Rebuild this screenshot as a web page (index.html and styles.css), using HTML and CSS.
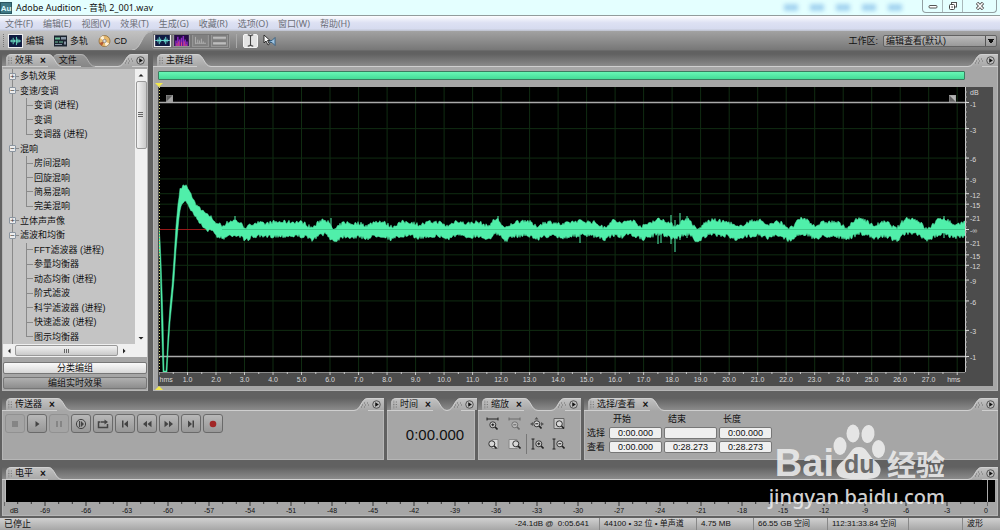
FILE: index.html
```html
<!DOCTYPE html>
<html lang="zh-CN">
<head>
<meta charset="utf-8">
<title>Adobe Audition - 音轨 2_001.wav</title>
<link rel="stylesheet" href="styles.css">
</head>
<body>
<svg class="sprite" aria-hidden="true">
  <defs>
    <linearGradient id="tabFill" x1="0" y1="0" x2="0" y2="1"><stop offset="0" stop-color="#c2c2c2"/><stop offset="1" stop-color="#a6a6a6"/></linearGradient>
    <linearGradient id="dimFill" x1="0" y1="0" x2="0" y2="1"><stop offset="0" stop-color="#989898"/><stop offset="1" stop-color="#868686"/></linearGradient>
    <symbol id="tail" viewBox="0 0 14 13" preserveAspectRatio="none"><path d="M0 0C7 0 7 12 14 12V13H0Z" fill="url(#tabFill)"/><path d="M0 .5C7 .5 7 12.5 14 12.5" fill="none" stroke="#d0d0d0"/></symbol>
    <symbol id="tail-dim" viewBox="0 0 14 13" preserveAspectRatio="none"><path d="M0 0C7 0 7 12 14 12V13H0Z" fill="url(#dimFill)"/><path d="M0 .5C7 .5 7 12.5 14 12.5" fill="none" stroke="#b2b2b2"/></symbol>
    <symbol id="grip" viewBox="0 0 6 9"><path d="M1 0v1M1 2v1M1 4v1M1 6v1M1 8v1M4 1v1M4 4v1M4 7v1" stroke="#747474" stroke-width="1.3"/></symbol>
    <symbol id="grip-flat" viewBox="0 0 9 6"><path d="M3 1h1M6 1h1M1 3h1M4 3h1M7 3h1M0 5h1M3 5h1" stroke="#707070" stroke-width="1.2"/></symbol>
    <symbol id="menu-dot" viewBox="0 0 10 10"><circle cx="5" cy="5" r="4.2" fill="#bcbcbc" stroke="#4a4a4a"/><path d="M3.6 2.4 7.6 5 3.6 7.6Z" fill="#111"/></symbol>
    <symbol id="lens" viewBox="0 0 9 9"><path d="m5.8 5.8 2.7 2.7" stroke="#222" stroke-width="1.6"/><circle cx="3.8" cy="3.8" r="3" fill="#d8d8d8" stroke="#333"/></symbol>
  </defs>
</svg>

<header class="titlebar">
  <svg class="app-icon" viewBox="0 0 12 12"><rect width="12" height="12" fill="#28555f"/><rect x="1" y="1" width="10" height="10" fill="#3f7884"/><text x="6" y="9" text-anchor="middle" class="app-icon-text">Au</text></svg>
  <h1>Adobe Audition - 音轨 2_001.wav</h1>
  <div class="haze" aria-hidden="true"><i></i><i></i><i></i><i></i><i></i></div>
  <div class="window-buttons">
    <button aria-label="最小化"><svg viewBox="0 0 10 8"><rect x="1" y="3.5" width="8" height="2.5" rx="1" fill="#fff" stroke="#555"/></svg></button>
    <button aria-label="还原"><svg viewBox="0 0 10 8"><rect x="3.5" y=".5" width="5" height="4.500" fill="#fff" stroke="#555"/><rect x="1.500" y="2.500" width="5" height="5" rx="1" fill="#fff" stroke="#444"/><rect x="3.500" y="4.300" width="1.200" height="1.500" fill="#444"/></svg></button>
    <button aria-label="关闭"><svg viewBox="0 0 10 8"><path d="m2 .8 6 6.4M8 .8 2 7.200" stroke="#555" stroke-width="3.200"/><path d="m2.400 1.200 5.200 5.600M7.600 1.200 2.400 6.800" stroke="#fff" stroke-width="1.500"/></svg></button>
  </div>
</header>

<nav class="menubar">
  <button>文件(F)</button><button>编辑(E)</button><button>视图(V)</button><button>效果(T)</button><button>生成(G)</button><button>收藏(R)</button><button>选项(O)</button><button>窗口(W)</button><button>帮助(H)</button>
</nav>

<div class="toolbar">
  <div class="modes">
    <svg class="bar-grip" viewBox="0 0 3 14"><path d="M1.500 0v14" stroke="#777" stroke-dasharray="1 1"/></svg>
    <button class="mode on"><svg viewBox="0 0 14 13"><rect width="14" height="13" fill="#101b40"/><path d="M1 6.500h12M3 5v3M4.500 3v7M6 5v3M8 2v9M9.500 4v5M11 5v3" stroke="#6fe3c4"/></svg>编辑</button>
    <button class="mode"><svg viewBox="0 0 13 11"><rect width="13" height="11" fill="#1c2430"/><path d="M1 2h5v2H1zM1 6h3v1H1zM5 6h4v1H5z" fill="#6fbf9c"/><path d="M7 1.500h5v2.500H7zM1 8.500h7v1H1zM10 6h2v3h-2z" fill="#8794a4"/></svg>多轨</button>
    <button class="mode"><svg viewBox="0 0 12 12"><circle cx="6" cy="6" r="5.500" fill="#e8b96c" stroke="#8c6b3d" stroke-width=".8"/><path d="M6 6 1.500 3A5.300 5.300 0 0 1 5 .8ZM6 6l4.700 2.600A5.300 5.300 0 0 1 7 11.200Z" fill="#fff2d8"/><path d="M6 6 1 8a5.300 5.300 0 0 0 2.500 2.700Z" fill="#b55d35"/><circle cx="6" cy="6" r="1.700" fill="#ddd" stroke="#777" stroke-width=".7"/></svg>CD</button>
  </div>
  <svg class="mode-tail" viewBox="0 0 20 20" preserveAspectRatio="none"><path d="M20 0C9 0 10 20 0 20V0Z" fill="url(#tabFill)"/><path d="M20 .5C9 .5 10 20 0 20" fill="none" stroke="#c4c4c4"/></svg>
  <div class="views">
    <button class="view on" aria-label="波形显示"><svg viewBox="0 0 16 12"><rect width="16" height="12" fill="#111a42"/><path d="M0 6h16M3 4v4M4.500 2v8M6 4v4M10 4v4M11.500 2v8M13 4v4" stroke="#6fe3d6"/></svg></button>
    <button class="view" aria-label="频谱显示"><svg viewBox="0 0 16 12"><rect width="16" height="12" fill="#250b45"/><path d="M2 12V6M4 12V2M6 12V5M8 12V3M10 12V1M12 12V5M14 12V7" stroke="#8d2ac2" stroke-width="1.600"/><path d="M3 12V9M5 12V7M8 12V8M11 12V7M13 12v-2" stroke="#e2487b"/></svg></button>
    <button class="view" aria-label="声像频谱"><svg viewBox="0 0 16 12"><rect width="16" height="12" fill="#808080"/><path d="M2.500 10V2M3 9h11M5 9V5M7 9V6M9 9V4M11 9V7" stroke="#b0b0b0" fill="none"/></svg></button>
    <button class="view" aria-label="相位频谱"><svg viewBox="0 0 16 12"><rect width="16" height="12" fill="#7c7c7c"/><path d="M1 3h14M1 9h14" stroke="#aaa" stroke-width="3"/><path d="M1 3h14M1 9h14" stroke="#ccc" stroke-width=".8"/></svg></button>
  </div>
  <div class="tools">
    <button class="tool on" aria-label="时间选择工具"><svg viewBox="0 0 10 12"><path d="M2.500.8Q5 .8 5 2.500Q5 .8 7.500.8M5 2v8M2.500 11.200Q5 11.200 5 9.500q0 1.700 2.500 1.700" fill="none" stroke="#444"/></svg></button>
    <button class="tool" aria-label="搓擦工具"><svg viewBox="0 0 13 13"><path d="M1 1v8l2-2 2 4 1.500-.8-2-3.700H7Z" fill="#fff" stroke="#222" stroke-width=".9"/><path d="M7 6.500h2l3-3v8l-3-3H7Z" fill="#9ec4e2" stroke="#31597b" stroke-width=".9"/></svg></button>
  </div>
  <label class="workspace-label" for="workspace">工作区:</label>
  <select id="workspace"><option>编辑查看(默认)</option></select>
</div>

<main class="workspace">
  <div class="upper">
    <section class="panel effects">
      <div class="head">
        <button class="tab"><svg class="grip"><use href="#grip"/></svg>效果<b>×</b></button><svg class="tail"><use href="#tail"/></svg>
        <button class="tab dim">文件</button><svg class="tail"><use href="#tail-dim"/></svg>
        <span class="fill"></span><svg class="tail flip"><use href="#tail"/></svg>
        <button class="cap" aria-label="面板菜单"><svg class="cap-grip"><use href="#grip-flat"/></svg><svg class="cap-dot"><use href="#menu-dot"/></svg></button>
      </div>
      <div class="body effects-body">
        <div class="tree-frame">
          <ul class="tree">
            <li class="node plus">多轨效果</li>
            <li class="node minus">变速/变调</li>
            <li class="leaf">变调 (进程)</li>
            <li class="leaf">变调</li>
            <li class="leaf last">变调器 (进程)</li>
            <li class="node minus">混响</li>
            <li class="leaf">房间混响</li>
            <li class="leaf">回旋混响</li>
            <li class="leaf">简易混响</li>
            <li class="leaf last">完美混响</li>
            <li class="node plus">立体声声像</li>
            <li class="node minus">滤波和均衡</li>
            <li class="leaf">FFT滤波器 (进程)</li>
            <li class="leaf">参量均衡器</li>
            <li class="leaf">动态均衡 (进程)</li>
            <li class="leaf">阶式滤波</li>
            <li class="leaf">科学滤波器 (进程)</li>
            <li class="leaf">快速滤波 (进程)</li>
            <li class="leaf last">图示均衡器</li>
          </ul>
          <div class="vscroll">
            <button aria-label="向上"><svg viewBox="0 0 8 8"><path d="M1.500 5.500 4 3l2.500 2.500Z" fill="#222"/></svg></button>
            <div class="thumb"><svg viewBox="0 0 6 6"><path d="M0 .5h5M0 2.500h5M0 4.500h5" stroke="#666"/></svg></div>
            <span class="fill"></span>
            <button aria-label="向下"><svg viewBox="0 0 8 8"><path d="M1.500 3 4 5.500 6.500 3Z" fill="#222"/></svg></button>
          </div>
          <div class="hscroll">
            <button aria-label="向左"><svg viewBox="0 0 8 8"><path d="M5.500 1.500 3 4l2.500 2.500Z" fill="#222"/></svg></button>
            <div class="thumb"><svg viewBox="0 0 6 6"><path d="M.5 1v4M2.500 1v4M4.500 1v4" stroke="#666"/></svg></div>
            <button aria-label="向右"><svg viewBox="0 0 8 8"><path d="M3 1.500 5.500 4 3 6.500Z" fill="#222"/></svg></button>
          </div>
        </div>
        <button class="wide light">分类编组</button>
        <button class="wide">编组实时效果</button>
      </div>
    </section>

    <section class="panel editor">
      <div class="head">
        <button class="tab plain"><svg class="grip"><use href="#grip"/></svg>主群组</button><svg class="tail"><use href="#tail"/></svg>
        <span class="fill"></span><svg class="tail flip"><use href="#tail"/></svg>
        <button class="cap" aria-label="面板菜单"><svg class="cap-grip"><use href="#grip-flat"/></svg><svg class="cap-dot"><use href="#menu-dot"/></svg></button>
      </div>
      <div class="body editor-body">
        <div class="range"></div>
        <svg class="marker" viewBox="0 0 8 4"><path d="M0 0h8L4 4Z" fill="#f3e84a"/></svg>
        <div class="display">
          <div class="plot">
            <svg id="wave" viewBox="159 87 806 285" preserveAspectRatio="none"></svg>
            <svg class="corner left" viewBox="0 0 8 8"><rect width="8" height="8" fill="#606060"/><path d="M0 8 8 0v8Z" fill="#a4a4a4"/><path d="M0 0h8v8H0Z" fill="none" stroke="#999"/></svg>
            <svg class="corner right" viewBox="0 0 8 8"><rect width="8" height="8" fill="#606060"/><path d="M0 0h8v8Z" fill="#b4b4b4"/><path d="M0 0h8v8H0Z" fill="none" stroke="#999"/></svg>
          </div>
          <svg class="db" id="db"></svg>
          <div class="time">
            <svg id="time-ticks" viewBox="0 0 28273 3" preserveAspectRatio="none"></svg>
            <div class="time-labels" id="time-labels"></div>
          </div>
        </div>
        <svg class="marker" viewBox="0 0 8 4"><path d="M0 4h8L4 0Z" fill="#f3e84a"/></svg>
      </div>
    </section>
  </div>

  <div class="lower">
    <section class="panel transport">
      <div class="head">
        <button class="tab"><svg class="grip"><use href="#grip"/></svg>传送器<b>×</b></button><svg class="tail"><use href="#tail"/></svg>
        <span class="fill"></span><svg class="tail flip"><use href="#tail"/></svg>
        <button class="cap" aria-label="面板菜单"><svg class="cap-grip"><use href="#grip-flat"/></svg><svg class="cap-dot"><use href="#menu-dot"/></svg></button>
      </div>
      <div class="body keys">
        <button disabled aria-label="停止"><svg viewBox="0 0 12 12"><path d="M3 3h6v6H3z"/></svg></button>
        <button aria-label="播放"><svg viewBox="0 0 12 12"><path d="m4.500 3 4 3-4 3Z"/></svg></button>
        <button disabled aria-label="暂停"><svg viewBox="0 0 12 12"><path d="M3 3h2v6H3zM7 3h2v6H7z"/></svg></button>
        <button aria-label="播放至结尾"><svg viewBox="0 0 12 12"><circle cx="6" cy="6" r="4.600" fill="none" stroke="#444"/><path d="M4 3h1.200v6H4zM6 3l3 3-3 3Z"/></svg></button>
        <button aria-label="循环播放"><svg viewBox="0 0 12 12"><path d="M3 4H1.500v5.500h9V6M3.500 4H8" fill="none" stroke="#444" stroke-width="1.500"/><path d="m7.500 1.500 3.500 2.500-3.500 2.500Z"/></svg></button>
        <button aria-label="转到开头"><svg viewBox="0 0 12 12"><path d="M3 2.500h1.500v7H3zM9 2.500v7L5 6Z"/></svg></button>
        <button aria-label="倒放"><svg viewBox="0 0 12 12"><path d="M6 2.800v6.400L2 6ZM10.500 2.800v6.400L6.500 6Z"/></svg></button>
        <button aria-label="快进"><svg viewBox="0 0 12 12"><path d="M1.500 2.800v6.400l4-3.200ZM6 2.800v6.400L10 6Z"/></svg></button>
        <button aria-label="转到结尾"><svg viewBox="0 0 12 12"><path d="M3 2.500v7L7 6ZM7.500 2.500H9v7H7.500z"/></svg></button>
        <button aria-label="录音"><svg viewBox="0 0 12 12"><circle cx="6" cy="6" r="3.300" fill="#a12626"/></svg></button>
      </div>
    </section>

    <section class="panel clock">
      <div class="head">
        <button class="tab"><svg class="grip"><use href="#grip"/></svg>时间<b>×</b></button><svg class="tail"><use href="#tail"/></svg>
        <span class="fill"></span><svg class="tail flip"><use href="#tail"/></svg>
        <button class="cap" aria-label="面板菜单"><svg class="cap-grip"><use href="#grip-flat"/></svg><svg class="cap-dot"><use href="#menu-dot"/></svg></button>
      </div>
      <div class="body clock-body"><output>0:00.000</output></div>
    </section>

    <section class="panel zoom">
      <div class="head">
        <button class="tab"><svg class="grip"><use href="#grip"/></svg>缩放<b>×</b></button><svg class="tail"><use href="#tail"/></svg>
        <span class="fill"></span><svg class="tail flip"><use href="#tail"/></svg>
        <button class="cap" aria-label="面板菜单"><svg class="cap-grip"><use href="#grip-flat"/></svg><svg class="cap-dot"><use href="#menu-dot"/></svg></button>
      </div>
      <div class="body zoom-body">
        <button aria-label="水平放大"><svg viewBox="0 0 14 14"><path d="M1 2h11M1 .5v3M12 .5v3" stroke="#222"/><use href="#lens" x="3" y="4" width="9" height="9"/><path d="M5.300 7.800h3M6.800 6.300v3" stroke="#111"/></svg></button>
        <button disabled aria-label="水平缩小"><svg viewBox="0 0 14 14"><path d="M1 2h11M1 .5v3M12 .5v3" stroke="#222"/><use href="#lens" x="3" y="4" width="9" height="9"/><path d="M5.300 7.800h3" stroke="#111"/></svg></button>
        <button aria-label="完全缩小"><svg viewBox="0 0 14 14"><path d="M0 7l3-2v4ZM14 7l-3-2v4ZM6.500 0l2 2.500h-4Z" fill="#555"/><use href="#lens" x="3" y="3" width="9" height="9"/><path d="M5.300 6.800h3" stroke="#111"/></svg></button>
        <button aria-label="缩放至选区"><svg viewBox="0 0 14 14"><path d="M2 1.500h10v10H2z" fill="#c6c6c6" stroke="#666"/><use href="#lens" x="3.500" y="3" width="9" height="9"/></svg></button>
        <button aria-label="放大选区左侧"><svg viewBox="0 0 14 14"><path d="M6 2.500h6v9H6z" fill="#d8d8d8" stroke="#888"/><use href="#lens" x="2" y="3" width="9" height="9"/></svg></button>
        <button aria-label="放大选区右侧"><svg viewBox="0 0 14 14"><path d="M1 2.500h8v9H1z" fill="#d8d8d8" stroke="#888"/><use href="#lens" x="4" y="3" width="9" height="9"/></svg></button>
        <button class="split" aria-label="垂直放大"><svg viewBox="0 0 14 14"><path d="M2 2v10M.500 2h3M.500 12h3" stroke="#222"/><use href="#lens" x="4" y="3" width="9" height="9"/><path d="M6.300 6.800h3M7.800 5.300v3" stroke="#111"/></svg></button>
        <button aria-label="垂直缩小"><svg viewBox="0 0 14 14"><path d="M2 2v10M.500 2h3M.500 12h3" stroke="#222"/><use href="#lens" x="4" y="3" width="9" height="9"/><path d="M6.300 6.800h3" stroke="#111"/></svg></button>
      </div>
    </section>

    <section class="panel selection">
      <div class="head">
        <button class="tab"><svg class="grip"><use href="#grip"/></svg>选择/查看<b>×</b></button><svg class="tail"><use href="#tail"/></svg>
        <span class="fill"></span><svg class="tail flip"><use href="#tail"/></svg>
        <button class="cap" aria-label="面板菜单"><svg class="cap-grip"><use href="#grip-flat"/></svg><svg class="cap-dot"><use href="#menu-dot"/></svg></button>
      </div>
      <div class="body selection-body">
        <span></span><span class="col">开始</span><span class="col">结束</span><span class="col">长度</span>
        <span>选择</span><input aria-label="选择 开始" value="0:00.000"><input aria-label="选择 结束" value=""><input aria-label="选择 长度" value="0:00.000">
        <span>查看</span><input aria-label="查看 开始" value="0:00.000"><input aria-label="查看 结束" value="0:28.273"><input aria-label="查看 长度" value="0:28.273">
      </div>
    </section>
  </div>

  <section class="panel levels">
    <div class="head">
      <button class="tab"><svg class="grip"><use href="#grip"/></svg>电平<b>×</b></button><svg class="tail"><use href="#tail"/></svg>
      <span class="fill"></span><svg class="tail flip"><use href="#tail"/></svg>
      <button class="cap" aria-label="面板菜单"><svg class="cap-grip"><use href="#grip-flat"/></svg><svg class="cap-dot"><use href="#menu-dot"/></svg></button>
    </div>
    <div class="body levels-body">
      <div class="meter"></div>
      <div class="level-scale">
        <svg id="level-ticks" viewBox="0 0 984 4" preserveAspectRatio="none"></svg>
        <div class="level-labels" id="level-labels"></div>
      </div>
    </div>
  </section>
</main>

<footer class="status">
  <span class="state">已停止</span>
  <span class="cell peak">-24.1dB @&nbsp; 0:05.641</span>
  <span class="cell format">44100 • 32 位 • 单声道</span>
  <span class="cell size">4.75 MB</span>
  <span class="cell disk">66.55 GB 空间</span>
  <span class="cell remain">112:31:33.84 空间</span>
  <span class="cell blank"></span>
  <span class="cell view-name">波形</span>
</footer>

<div class="watermark" aria-hidden="true">
  <div class="brand">
    <span class="bai">Bai</span>
    <span class="paw"><svg viewBox="0 0 52 56"><g fill="currentColor"><ellipse cx="7" cy="22" rx="6.500" ry="9"/><ellipse cx="20" cy="9.500" rx="6.500" ry="9"/><ellipse cx="35" cy="10" rx="6.500" ry="9" transform="rotate(8 35 10)"/><ellipse cx="45.500" cy="25" rx="6.500" ry="9"/><path d="M26 23c8 0 9 8 15 13 5 4 8 8 6 13-2 6-9 6-21 6S6 55 4 49c-2-5 2-9 7-13 6-5 7-13 15-13Z"/></g></svg><em>du</em></span>
    <span class="jy">经验</span>
  </div>
  <div class="url">jingyan.baidu.com</div>
</div>
<script src="app.js"></script>
</body>
</html>
```
FILE: styles.css
```css
*, *::before, *::after { box-sizing: border-box; }
html, body { margin: 0; }
body {
  min-height: 100vh;
  display: flex;
  flex-direction: column;
  background: #616161;
  color: #111;
  font: 9px/12px "Liberation Sans", "Noto Sans CJK SC", sans-serif;
  overflow: hidden;
}
button, input, select { font: inherit; color: inherit; }
button { border: 0; padding: 0; background: none; display: inline-flex; align-items: center; justify-content: center; white-space: nowrap; }
svg { display: block; flex: none; }
.sprite { position: absolute; width: 0; height: 0; }
.fill { flex: 1; }

.titlebar { display: flex; align-items: center; height: 16px; background: #e4ffff; border-bottom: 1px solid #929c9c; }
.app-icon { width: 12px; height: 12px; margin-right: 4px; }
.app-icon-text { font: bold 8px "Liberation Sans", sans-serif; fill: #d9f6f8; }
.titlebar h1 { margin: 0; font: 9px/15px "Noto Sans", "Noto Sans CJK SC", sans-serif; flex: 1; }
.haze { display: flex; gap: 12px; margin-right: 20px; filter: blur(2px); }
.haze i { width: 14px; height: 7px; background: #a4d4f0; }
.window-buttons { display: flex; align-self: flex-start; margin-right: 3px; border: 1px solid #929fa2; border-top: 0; border-radius: 0 0 4px 4px; }
.window-buttons button { width: 20px; height: 12px; border-right: 1px solid #a9b8ba; }
.window-buttons button:last-child { width: 33px; border: 0; }
.window-buttons svg { width: 10px; height: 8px; }

.menubar { display: flex; gap: 10px; height: 15px; padding-left: 5px; color: #6c6f78; background: linear-gradient(#fdfdff, #dde1f3 45%, #d6dbef 85%, #bcc0cc); font-family: "Noto Sans", "Noto Sans CJK SC", sans-serif; }

.toolbar { display: flex; align-items: center; height: 20px; padding-right: 3px; background: linear-gradient(#a2a2a2, #777); border-bottom: 1px solid #6a6a6a; }
.modes { display: flex; align-items: center; align-self: stretch; gap: 10px; width: 132px; padding-left: 2px; background: linear-gradient(#c2c2c2, #a6a6a6); }
.bar-grip { width: 3px; height: 14px; }
.modes .mode { gap: 3px; font-size: 9px; }
.mode svg { width: 13px; height: 12px; }
.mode.on svg { width: 15px; height: 14px; border: 1px solid #eee; margin-left: -7px; }
.mode-tail { width: 20px; height: 19px; }
.views { display: flex; border: 1px solid #999; border-radius: 2px; }
.view { width: 19px; height: 14px; border: 1px solid #777; background: #959595; }
.view.on { background: #ececec; }
.view svg { width: 15px; height: 11px; }
.tools { display: flex; flex: 1; gap: 4px; margin-left: 6px; padding-left: 6px; border-left: 1px solid #aaa; }
.tool { width: 15px; height: 14px; }
.tool.on { background: #e4e4e4; border: 1px solid #f6f6f6; border-radius: 2px; }
.tool svg { width: 13px; height: 13px; }
.workspace-label { margin-right: 5px; }
#workspace {
  appearance: none; width: 114px; height: 12px; padding: 0 2px; line-height: 10px;
  border: 1px solid #626262; border-radius: 2px;
  background: conic-gradient(from -35deg at 50% 100%, #111 70deg, transparent 0) 104px 3px / 6px 5px no-repeat, linear-gradient(90deg, transparent 101px, #555 101px, #555 102px, transparent 102px), linear-gradient(#bbb, #999);
}

.workspace { flex: 1; display: flex; flex-direction: column; gap: 7px; padding: 3px 2px 2px; min-height: 0; }
.upper { flex: 1; display: flex; gap: 5px; min-height: 0; }
.lower { display: flex; gap: 3px; }
.panel { display: flex; flex-direction: column; min-width: 0; }
.head { display: flex; height: 13px; padding-left: 4px; background: linear-gradient(#616161, #8b8b8b); border-bottom: 1px solid #cfcfcf; }
.tab { height: 12px; gap: 2px; padding: 0 0 0 2px; border-radius: 5px 0 0; border-top: 1px solid #d0d0d0; background: linear-gradient(#c2c2c2, #a8a8a8); line-height: 11px; }
.tab b { margin: 0 2px 0 5px; font-size: 10px; line-height: 10px; }
.tab.plain { padding-right: 4px; }
.tab.dim { margin-left: -9px; padding: 0 4px 0 6px; background: linear-gradient(#989898, #868686); border-color: #b2b2b2; }
.tab + .tail { position: relative; z-index: 1; }
.grip { width: 5px; height: 9px; }
.tail { width: 14px; height: 13px; }
.tail.flip { transform: scaleX(-1); }
.cap { position: relative; z-index: 1; height: 12px; gap: 2px; padding-right: 3px; border-top: 1px solid #d0d0d0; background: linear-gradient(#c2c2c2, #a8a8a8); }
.cap-grip { width: 9px; height: 6px; margin-left: -7px; }
.cap-dot { width: 9px; height: 9px; }
.body { flex: 1; background: #a6a6a6; border: 1px solid #b6b6b6; border-top: 0; min-height: 0; }

.effects { width: 146px; }
.effects-body { display: flex; flex-direction: column; gap: 3px; padding: 2px 0 1px; }
.tree-frame { flex: 1; display: grid; grid-template: minmax(0, 1fr) 13px / minmax(0, 1fr) 12px; margin-bottom: 2px; background: #f0f0f0; min-height: 0; }
.tree { list-style: none; margin: 0; padding: 0; display: flex; flex-direction: column; background: #c4c4c4; overflow: hidden; }
.tree li { flex: 1; display: flex; align-items: center; min-height: 0; line-height: 12px; }
.tree .node::before { width: 7px; height: 7px; margin: 0 4px 0 6px; border: 1px solid #8b95a0; border-radius: 1px; background: #ececec; color: #333; font: 8px/5px "Liberation Sans", sans-serif; text-align: center; }
.tree .plus::before { content: "+"; }
.tree .minus::before { content: "−"; }
.tree .node { background: linear-gradient(#8a8a8a, #8a8a8a) 9px 0 / 1px 100% no-repeat, linear-gradient(#8a8a8a, #8a8a8a) 13px 50% / 3px 1px no-repeat; }
.tree .leaf { padding-left: 31px; background: linear-gradient(#8a8a8a, #8a8a8a) 9px 0 / 1px 100% no-repeat, linear-gradient(#8a8a8a, #8a8a8a) 23px 0 / 1px 100% no-repeat, linear-gradient(#8a8a8a, #8a8a8a) 23px 50% / 7px 1px no-repeat; }
.tree .last { background-size: 1px 100%, 1px 50%, 7px 1px; }
.vscroll { display: flex; flex-direction: column; align-items: center; }
.vscroll button, .hscroll button { width: 12px; height: 12px; }
.vscroll svg, .hscroll svg { width: 8px; height: 8px; }
.thumb { display: flex; align-items: center; justify-content: center; border: 1px solid #999; border-radius: 2px; background: #dcdcdc; }
.vscroll .thumb { width: 11px; height: 68px; background: linear-gradient(90deg, #f2f2f2, #c9c9c9); }
.vscroll .thumb svg, .hscroll .thumb svg { width: 6px; height: 6px; }
.hscroll { grid-column: 1 / -1; display: flex; align-items: center; }
.hscroll .thumb { width: 103px; height: 11px; background: linear-gradient(#f2f2f2, #c9c9c9); }
.wide { height: 12px; border: 1px solid #777; border-radius: 2px; background: linear-gradient(#b0b0b0, #8d8d8d); line-height: 10px; }
.wide.light { background: linear-gradient(#fafafa, #d8d8d8); }

.editor { flex: 1; }
.editor-body { display: flex; flex-direction: column; padding: 4px 4px 0; }
.range { height: 9px; margin-right: 28px; border: 1px solid #3c7c60; border-radius: 1px; background: linear-gradient(#67f7b5, #45dc98); }
.marker { width: 8px; height: 4px; margin-left: -3px; }
.range + .marker { margin-top: 3px; }
.display { flex: 1; display: grid; grid-template: minmax(0, 1fr) 14px / minmax(0, 1fr) 28px; padding-left: 1px; background: #4c4c4c; min-height: 0; }
.plot { position: relative; background: #000; min-height: 0; }
.plot > #wave { position: absolute; inset: 0; width: 100%; height: 100%; }
.corner { position: absolute; top: 8px; width: 7px; height: 7px; }
.corner.left { left: 7px; }
.corner.right { right: 9px; }
.db { width: 100%; height: 100%; overflow: visible; font: 7px "Liberation Sans", sans-serif; fill: #dadada; stroke: none; }
.time { color: #dadada; font-size: 7px; line-height: 10px; }
#time-ticks { width: 100%; height: 3px; }
.time-labels, .level-labels { display: flex; }
.time-labels span, .level-labels span { flex: 1 1 0; width: 0; display: flex; justify-content: center; white-space: nowrap; }

.lower .body { min-height: 49px; }
.transport { flex: 382 1 0; }
.clock { width: 88px; }
.zoom { width: 103px; }
.selection { flex: 414 1 0; }
.keys { display: flex; align-items: flex-start; gap: 2px; padding: 3px 2px; }
.keys button { width: 20px; height: 19px; border: 1px solid #6a6a6a; border-radius: 3px; background: linear-gradient(#b8b8b8, #979797); fill: #444; }
.keys button:disabled { border-color: #919191; fill: #858585; background: #a4a4a4; }
.keys svg { width: 12px; height: 12px; }
.clock-body { display: flex; align-items: center; justify-content: center; padding-left: 8px; font: 15px/18px "Liberation Sans", sans-serif; }
.zoom-body { display: grid; grid-template: 20px 20px / repeat(4, 22px); padding: 3px 0 0 3px; }
.zoom-body svg { width: 14px; height: 14px; }
.zoom-body button:disabled { opacity: .45; }
.zoom-body .split { border-left: 1px solid #777; }
.selection-body { display: grid; grid-template: 13px 13px 13px / 20px repeat(3, 53px); column-gap: 2px; row-gap: 1px; align-items: center; padding: 1px 0 0 2px; }
.selection-body .col { padding-left: 4px; }
.selection-body input { width: 100%; min-width: 0; height: 12px; padding: 0 0 0 8px; border: 1px solid #777; border-radius: 2px; background: #efefef; line-height: 10px; }

.levels-body { padding: 0 1px; min-height: 36px; }
.meter { height: 22px; margin: 0 1px; background: #000; border-left: 1px solid #bbb; }
.meter::after { content: ""; display: block; width: 1px; height: 100%; margin-left: auto; margin-right: 7px; background: #aaa; }
.level-scale { padding: 0 8px 0 0; font-size: 7px; line-height: 9px; }
#level-ticks { width: 100%; height: 4px; }

.status { display: flex; align-items: center; height: 12px; padding-left: 4px; background: linear-gradient(#d0d0d0, #a6a6a6); font-size: 8px; line-height: 12px; white-space: nowrap; }
.state { flex: 1; font-size: 9px; }
.cell { padding-left: 4px; border-left: 1px solid #888; height: 12px; }
.peak { width: 88px; border: 0; }
.format { width: 97px; }
.size { width: 57px; }
.disk { width: 74px; }
.remain { width: 81px; }
.blank { width: 54px; }
.view-name { width: 38px; }

.watermark { position: absolute; right: 55px; bottom: 21px; color: rgba(236, 236, 236, .9); pointer-events: none; }
.brand { display: flex; align-items: flex-end; justify-content: flex-end; margin-bottom: 5px; }
.bai { margin-right: -1px; font: bold 38px/34px "Liberation Sans", sans-serif; }
.paw { position: relative; width: 52px; height: 56px; }
.paw svg { width: 52px; height: 56px; }
.paw em { position: absolute; left: 11px; bottom: 4px; font: normal bold 25px/24px "Liberation Sans", sans-serif; color: #6c6c6c; }
.jy { margin-left: 2px; font: bold 29px/34px "Noto Sans CJK SC", sans-serif; }
.url { font: 500 20px/24px "Noto Sans", sans-serif; text-align: right; }
```
FILE: app.js
```js
const PLOT = { left: 159, right: 965, top: 87, bottom: 372, mid: 229.5, half: 142.5 };
const DURATION = 28.273;
const LEVELS = [3, 6, 9, 12, 15, 21];

// Start of the clip: a thin swing below the baseline, then the peak.
const ATTACK = [
  [159, 228, 250], [160, 240, 258], [161, 262, 300], [162, 290, 340], [163, 320, 372], [164, 371, 372],
  [166, 371, 372], [167, 355, 372], [168, 335, 352], [170, 306, 322], [172, 286, 302], [174, 258, 280],
  [176, 226, 250], [178, 204, 228], [180, 191, 208], [183, 187, 201], [186, 187, 199], [190, 194, 207],
  [196, 206, 216], [202, 212, 224], [208, 217, 229], [211, 218, 228], [217, 226, 235], [222, 225, 236]
];
// [x, depth]: where the signal dips, and [x, height, depth]: isolated spikes.
const DIPS = [[220, 5], [246, 6], [264, 2], [312, 6], [334, 9], [353, 2], [367, 4], [392, 5], [420, 3], [448, 5], [466, 2], [488, 5], [505, 8], [536, 5], [562, 3], [604, 6], [620, 3], [642, 5], [675, 4], [697, 9], [738, 6], [767, 4], [790, 7], [815, 4], [846, 6], [874, 4], [896, 7], [927, 8], [955, 3]];
const SWELLS = [[235, 2], [325, 4], [376, 1], [455, 2], [497, 5], [527, 2], [580, 1], [615, 3], [631, 2], [660, 3], [688, 4], [714, 2], [760, 3], [803, 4], [861, 4], [907, 4], [917, 2], [943, 4]];
const SPIKES = [[235, 216, 236], [331, 218, 234], [498, 216, 234], [580, 222, 243], [658, 218, 244], [661, 220, 243], [671, 215, 244], [675, 220, 252], [680, 213, 240], [687, 216, 238], [804, 218, 236], [944, 216, 238]];

let seed = 7;
function noise() {
  seed = (seed * 16807) % 2147483647;
  return seed / 2147483647;
}

const bumps = (list, x, width) => list.reduce((sum, [cx, h]) => sum + h * Math.exp(-(((x - cx) / width) ** 2)), 0);

function envelope(x) {
  if (x < 222) {
    const i = ATTACK.findIndex(p => p[0] > x);
    const a = ATTACK[i - 1], b = ATTACK[i], t = (x - a[0]) / (b[0] - a[0]);
    const jitter = x > 178 ? noise() * 3 : 0;
    return [a[1] + (b[1] - a[1]) * t - jitter, a[2] + (b[2] - a[2]) * t + jitter];
  }
  const shift = bumps(DIPS, x, 6) - bumps(SWELLS, x, 7);
  return [224 + shift * .9 - noise() * 4, 234 + shift * .6 + noise() * 4];
}

const wave = document.getElementById("wave");
let grid = "";
for (let s = 1; s < DURATION; s++) {
  const x = PLOT.left + s / DURATION * (PLOT.right - PLOT.left);
  grid += `M${x.toFixed(1)} 87V372`;
}
for (const db of LEVELS) {
  const h = PLOT.half * 10 ** (-db / 20);
  grid += `M159 ${PLOT.mid - h}H965M159 ${PLOT.mid + h}H965`;
}
let upper = [], lower = [];
for (let x = PLOT.left; x <= PLOT.right; x++) {
  const [t, b] = envelope(x);
  upper.push(`${x} ${t.toFixed(1)}`);
  lower.unshift(`${x} ${b.toFixed(1)}`);
}
wave.innerHTML = `
  <path d="${grid}" stroke="#102c12" fill="none"/>
  <path d="M159 102.500H965M159 356.500H965" stroke="#aaa" stroke-width="1.500"/>
  <path d="M159 229.500H965" stroke="#961818"/>
  <path d="M${upper.join("L")}L${lower.join("L")}Z" fill="#50efaa" stroke="#50efaa" stroke-width=".5"/>
  <path d="${SPIKES.map(s => `M${s[0]} ${s[1]}V${s[2]}`).join("")}" stroke="#50efaa" stroke-width="1"/>
  <path d="M222 229.500H965" stroke="#3cc98a"/>
  <path d="M159.500 87V372" stroke="#d2cf72" stroke-dasharray="1 2"/>`;

const pct = y => `${((y - PLOT.top) / (PLOT.bottom - PLOT.top) * 100).toFixed(2)}%`;
const scale = [[91, "dB"], [PLOT.mid, "-∞"]];
for (const db of [1, ...LEVELS]) {
  const h = PLOT.half * 10 ** (-db / 20);
  scale.push([PLOT.mid - h, `-${db}`], [PLOT.mid + h, `-${db}`]);
}
let dbMarkup = `<line x1="0.5" x2="0.5" y1="0" y2="100%" stroke="#ccc"/>`;
for (let y = 92; y < PLOT.bottom; y += 5) dbMarkup += `<line x1="0" x2="2" y1="${pct(y)}" y2="${pct(y)}" stroke="#aaa"/>`;
for (const [y, label] of scale) {
  if (label !== "dB") dbMarkup += `<line x1="0" x2="4" y1="${pct(y)}" y2="${pct(y)}" stroke="#ddd"/>`;
  dbMarkup += `<text x="5" y="${pct(y + 1)}" dy="3">${label}</text>`;
}
document.getElementById("db").innerHTML = dbMarkup;

let ticks = "M0 0H28273";
for (let s = 0; s <= 28; s += .5) ticks += `M${s * 1000} 0V${s % 1 ? 2 : 3}`;
document.getElementById("time-ticks").innerHTML = `<path d="${ticks}" stroke="#ccc" vector-effect="non-scaling-stroke" fill="none"/>`;

function addLabel(parent, text, grow) {
  const span = document.createElement("span");
  span.textContent = text;
  span.style.flexGrow = grow;
  parent.append(span);
}
const timeLabels = document.getElementById("time-labels");
addLabel(timeLabels, "hms", .5);
for (let s = 1; s <= 27; s++) addLabel(timeLabels, s.toFixed(1), 1);
addLabel(timeLabels, "hms", .773);

let levelTicks = "";
for (let i = 0; i <= 72; i++) levelTicks += `M${(i * 984 / 72).toFixed(1)} 0V${i % 3 ? 2 : 4}`;
document.getElementById("level-ticks").innerHTML = `<path d="${levelTicks}" stroke="#333" fill="none"/>`;
const levelLabels = document.getElementById("level-labels");
addLabel(levelLabels, "dB", .5);
for (let db = -69; db < 0; db += 3) addLabel(levelLabels, db, 1);
addLabel(levelLabels, "0", .5);
levelLabels.lastChild.style.justifyContent = "flex-end";
```
